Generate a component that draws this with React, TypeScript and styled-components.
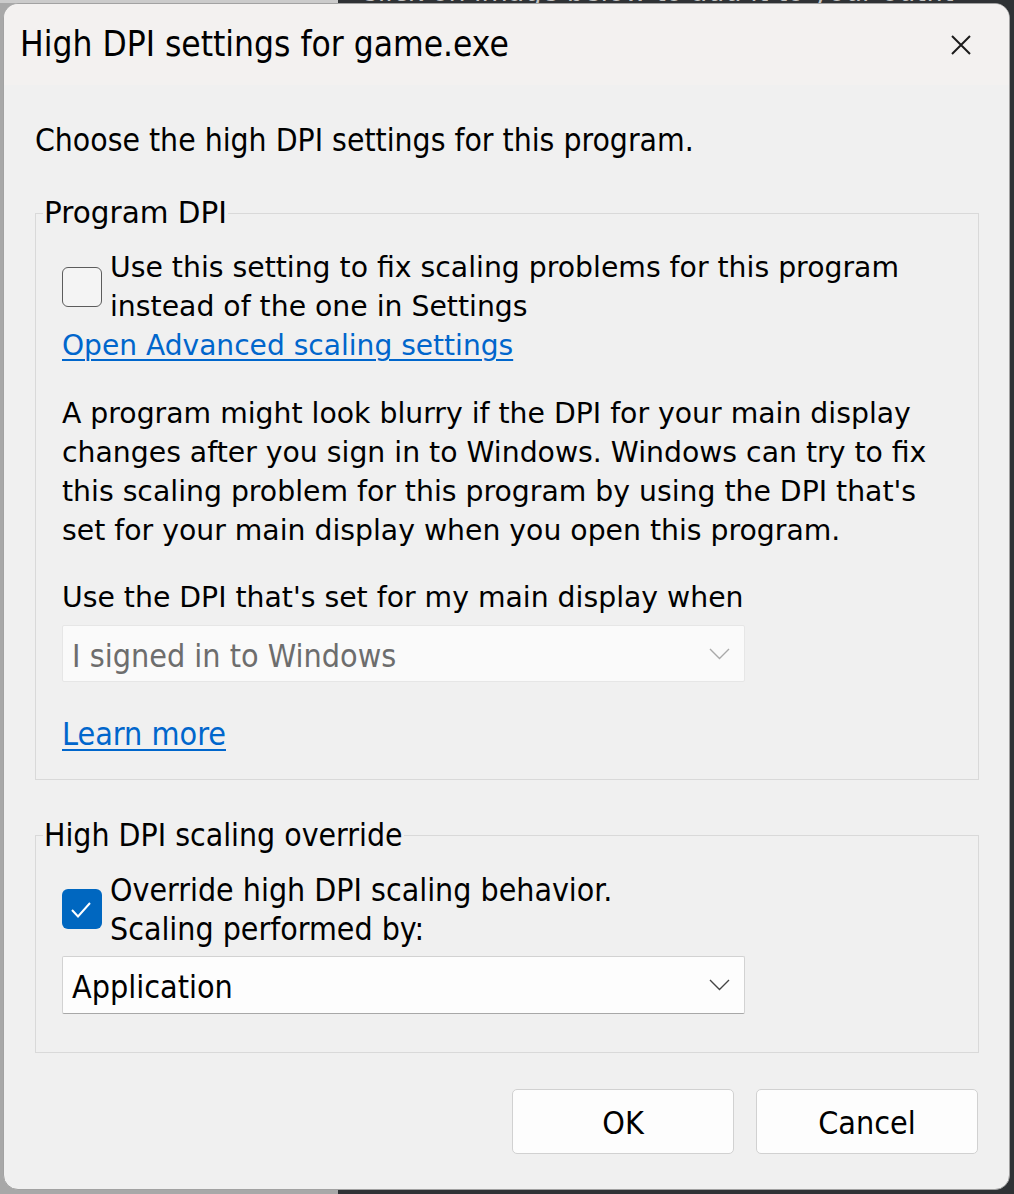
import styled, { createGlobalStyle } from "styled-components";

const WIDE = `"DejaVu Sans", Verdana, sans-serif`;
const NARROW = `"DejaVu Sans Condensed", "DejaVu Sans", Tahoma, sans-serif`;

const GlobalStyle = createGlobalStyle`
  html, body {
    margin: 0;
    padding: 0;
  }
  body {
    background: #2f3235;
  }
`;

const Backdrop = styled.div`
  width: 1014px;
  height: 1194px;
  box-sizing: border-box;
  display: flex;
  flex-direction: column;
  padding: 0 4px 4px 3px;
  background: linear-gradient(90deg, #a8a8a8 0 338px, #2f3235 338px);
  overflow: hidden;
`;

const TopStrip = styled.div`
  flex: none;
  height: 3px;
  overflow: hidden;
  margin-left: -3px;
  padding-left: 359px;
  background: linear-gradient(90deg, #cbcbcb 0 338px, transparent 338px);
  font-family: ${NARROW};
  font-size: 30px;
  line-height: 30px;
  color: #c4c4c4;
  white-space: nowrap;
  > span {
    display: block;
    margin-top: -24px;
  }
`;

const Dialog = styled.div`
  flex: 1;
  display: flex;
  flex-direction: column;
  background: #f0f0f0;
  border: 1px solid #a2a2a2;
  border-radius: 15px;
  overflow: hidden;
  color: #000;
`;

const TitleBar = styled.div`
  flex: none;
  height: 81px;
  display: flex;
  align-items: center;
  justify-content: space-between;
  padding: 0 38px 0 16px;
  background: #f3f1f0;
`;

const Title = styled.div`
  font-family: ${NARROW};
  font-size: 35px;
  line-height: 40px;
  margin-top: -1px;
`;

const Content = styled.div`
  display: flex;
  flex-direction: column;
  padding: 0 30px 0 31px;
`;

const Intro = styled.div`
  margin-top: 36px;
  font-family: ${NARROW};
  font-size: 31.6px;
  line-height: 39px;
`;

const Group = styled.fieldset<{ $top: number; $bottom: number }>`
  margin: ${({ $top }) => $top}px 0 0 0;
  min-width: 0;
  border: 1px solid #d9d9d9;
  padding: 15px 30px ${({ $bottom }) => $bottom}px 26px;
  display: flex;
  flex-direction: column;
`;

const Legend = styled.legend<{ $narrow?: boolean }>`
  margin-left: -19px;
  padding: 0 1px;
  font-family: ${({ $narrow }) => ($narrow ? NARROW : WIDE)};
  font-size: ${({ $narrow }) => ($narrow ? 31.7 : 29.5)}px;
  line-height: 39px;
`;

const CheckRow = styled.label`
  display: flex;
  align-items: center;
  gap: 8px;
`;

const Box = styled.span<{ $checked?: boolean }>`
  flex: none;
  width: 40px;
  height: 40px;
  box-sizing: border-box;
  border-radius: 6px;
  border: ${({ $checked }) => ($checked ? "none" : "1.5px solid #5c5c5c")};
  background: ${({ $checked }) => ($checked ? "#0067c0" : "#f4f4f4")};
  display: flex;
  svg {
    display: block;
  }
`;

const Text = styled.div<{ $narrow?: boolean }>`
  font-family: ${({ $narrow }) => ($narrow ? NARROW : WIDE)};
  font-size: ${({ $narrow }) => ($narrow ? 31.8 : 28.3)}px;
  line-height: 39px;
`;

const Para = styled(Text)<{ $gap?: number }>`
  margin-top: ${({ $gap }) => $gap ?? 0}px;
`;

const Link = styled.a<{ $narrow?: boolean; $gap?: number }>`
  display: block;
  align-self: flex-start;
  margin-top: ${({ $gap }) => $gap ?? 0}px;
  font-family: ${({ $narrow }) => ($narrow ? NARROW : WIDE)};
  font-size: ${({ $narrow }) => ($narrow ? 32 : 28.1)}px;
  line-height: 39px;
  color: #0066cc;
  text-decoration: underline;
  text-decoration-thickness: 2px;
  text-underline-offset: 4px;
  cursor: pointer;
`;

const Select = styled.div<{ $disabled?: boolean }>`
  margin-top: 8px;
  width: 683px;
  height: ${({ $disabled }) => ($disabled ? 57 : 58)}px;
  box-sizing: border-box;
  display: flex;
  align-items: center;
  justify-content: space-between;
  padding: 0 14px 0 9px;
  border: 1px solid ${({ $disabled }) => ($disabled ? "#e6e6e6" : "#d2d2d2")};
  border-bottom-color: ${({ $disabled }) => ($disabled ? "#e6e6e6" : "#a8a8a8")};
  border-radius: 2px;
  background: ${({ $disabled }) => ($disabled ? "#fafafa" : "#fdfdfd")};
  color: ${({ $disabled }) => ($disabled ? "#6d6d6d" : "#000")};
  font-family: ${NARROW};
  font-size: 32px;
  line-height: 39px;
  > span {
    padding-top: 5px;
  }
`;

const ButtonRow = styled.div`
  margin-top: 36px;
  display: flex;
  justify-content: flex-end;
  gap: 22px;
  padding-right: 1px;
`;

const Button = styled.button`
  flex: none;
  width: 222px;
  height: 65px;
  box-sizing: border-box;
  border: 1px solid #d1d1d1;
  border-radius: 5px;
  background: #fdfdfd;
  font-family: ${NARROW};
  font-size: 32px;
  color: #000;
  padding: 3px 0 0;
`;

const Chevron = ({ color }: { color: string }) => (
  <svg width="21" height="12" viewBox="0 0 21 12">
    <polyline
      points="1,1 10.5,10.5 20,1"
      fill="none"
      stroke={color}
      strokeWidth="1.4"
    />
  </svg>
);

const CloseIcon = () => (
  <svg width="20" height="20" viewBox="0 0 20 20">
    <path d="M1 1 L19 19 M19 1 L1 19" stroke="#1b1b1b" strokeWidth="2" />
  </svg>
);

const App = () => {
  return (
    <>
      <GlobalStyle />
      <Backdrop>
        <TopStrip>
          <span>Click on image below to add it to your outfit</span>
        </TopStrip>
        <Dialog>
          <TitleBar>
            <Title>High DPI settings for game.exe</Title>
            <CloseIcon />
          </TitleBar>
          <Content>
            <Intro>Choose the high DPI settings for this program.</Intro>

            <Group $top={34} $bottom={25}>
              <Legend>Program DPI</Legend>
              <CheckRow>
                <Box />
                <Text>
                  Use this setting to fix scaling problems for this program
                  <br />
                  instead of the one in Settings
                </Text>
              </CheckRow>
              <Link>Open Advanced scaling settings</Link>
              <Para $gap={29}>
                A program might look blurry if the DPI for your main display
                <br />
                changes after you sign in to Windows. Windows can try to fix
                <br />
                this scaling problem for this program by using the DPI that's
                <br />
                set for your main display when you open this program.
              </Para>
              <Para $gap={28}>Use the DPI that's set for my main display when</Para>
              <Select $disabled>
                <span>I signed in to Windows</span>
                <Chevron color="#a9a9a9" />
              </Select>
              <Link $narrow $gap={33}>
                Learn more
              </Link>
            </Group>

            <Group $top={36} $bottom={38}>
              <Legend $narrow>High DPI scaling override</Legend>
              <CheckRow>
                <Box $checked>
                  <svg width="40" height="40" viewBox="0 0 40 40">
                    <polyline
                      points="10,21 16,27.5 28,14"
                      fill="none"
                      stroke="#ffffff"
                      strokeWidth="2"
                    />
                  </svg>
                </Box>
                <Text $narrow>
                  Override high DPI scaling behavior.
                  <br />
                  Scaling performed by:
                </Text>
              </CheckRow>
              <Select>
                <span>Application</span>
                <Chevron color="#444444" />
              </Select>
            </Group>

            <ButtonRow>
              <Button>OK</Button>
              <Button>Cancel</Button>
            </ButtonRow>
          </Content>
        </Dialog>
      </Backdrop>
    </>
  );
};

export default App;
